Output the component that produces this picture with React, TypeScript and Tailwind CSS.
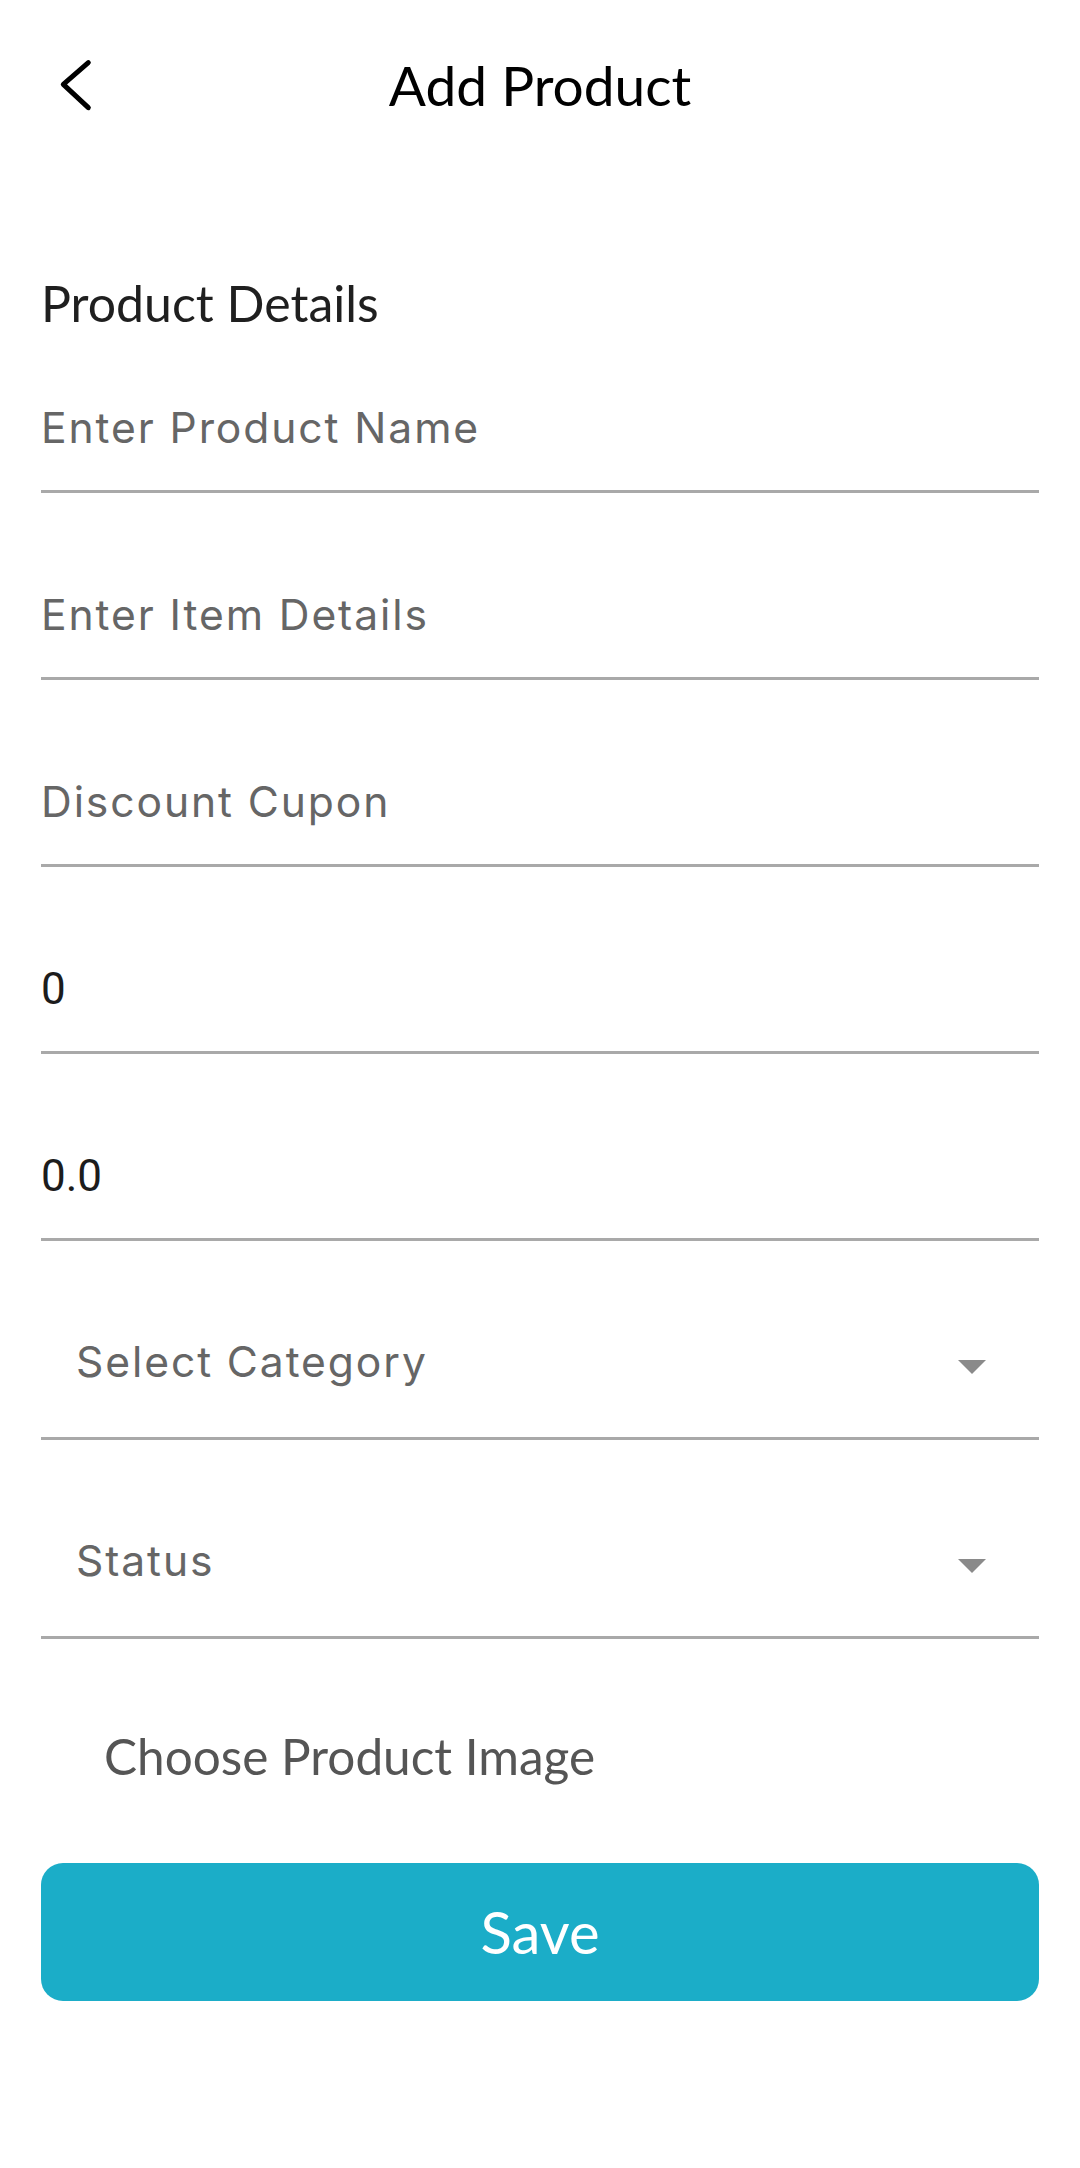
import React from 'react'

const lato = { fontFamily: 'Lato, "Liberation Sans", sans-serif' }

function BackIcon() {
    return (
        <svg width="40" height="60" viewBox="0 0 40 60" className="ml-[58px]">
            <polyline
                points="30.3,7.7 5.3,29.3 30.3,52.7"
                fill="none"
                stroke="#000"
                strokeWidth="5"
                strokeLinecap="round"
                strokeLinejoin="round"
            />
        </svg>
    )
}

function DropArrow() {
    return (
        <svg width="28" height="14" viewBox="0 0 28 14" className="mt-[10px]">
            <polygon points="0,0 28,0 14,14" fill="#8a8a8a" />
        </svg>
    )
}

function TextField({ value, placeholder, first }: { value?: string; placeholder?: string; first?: boolean }) {
    return (
        <div className={`border-b-[3px] border-[#a9a9a9] pb-[40px] ${first ? 'pt-[78px]' : 'pt-[100px]'}`}>
            {value ? (
                <div className="h-[44px] leading-[44px] text-[44px] text-[#1c1c1c] font-['Roboto',sans-serif]">{value}</div>
            ) : (
                <div className="h-[44px] leading-[44px] text-[42.6px] tracking-[1.9px] text-[#666666] font-['Inter',sans-serif]">{placeholder}</div>
            )}
        </div>
    )
}

function DropdownField({ label }: { label: string }) {
    return (
        <div className="border-b-[3px] border-[#a9a9a9] pt-[99px] pb-[53px] pl-[35px] pr-[53px] flex items-center justify-between">
            <div className="h-[44px] leading-[44px] text-[42.6px] tracking-[1.9px] text-[#666666] font-['Inter',sans-serif]">{label}</div>
            <DropArrow />
        </div>
    )
}

export default function App() {
    return (
        <div className="w-[1080px] min-h-[2168px] bg-white">
            {/* app bar */}
            <div className="h-[170px] grid grid-cols-[200px_1fr_200px] items-center">
                <BackIcon />
                <div className="text-center text-[55px] leading-none text-black" style={lato}>Add Product</div>
                <div />
            </div>

            <div className="px-[41px]">
                <div className="mt-[109px] h-[49px] leading-[49px] text-[50px] text-[#1f1f1f]" style={lato}>Product Details</div>

                <TextField placeholder="Enter Product Name" first />
                <TextField placeholder="Enter Item Details" />
                <TextField placeholder="Discount Cupon" />
                <TextField value="0" />
                <TextField value="0.0" />

                <DropdownField label="Select Category" />
                <DropdownField label="Status" />

                <div className="mt-[93px] pl-[63px] h-[49px] leading-[49px] text-[49.5px] text-[#555555]" style={lato}>Choose Product Image</div>

                <button className="mt-[82px] w-full h-[138px] rounded-[22px] bg-[#1badc8] flex items-center justify-center">
                    <span className="text-[58px] leading-none text-white" style={lato}>Save</span>
                </button>
            </div>
        </div>
    )
}
